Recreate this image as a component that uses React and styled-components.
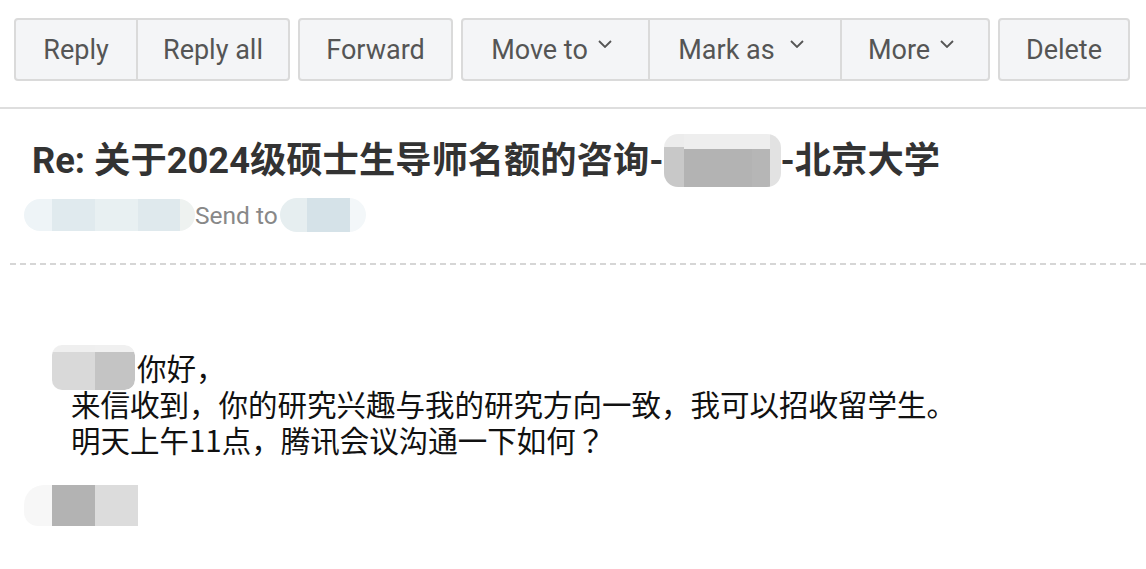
import React from "react";
import styled, { createGlobalStyle } from "styled-components";

const Global = createGlobalStyle`
  html, body { margin: 0; padding: 0; background: #fff; }
  body { font-family: Roboto, "Noto Sans CJK SC", sans-serif; }
`;

const Page = styled.div`
  width: 1146px;
  height: 569px;
  overflow: hidden;
  background: #fff;
`;

const Toolbar = styled.div`
  display: flex;
  gap: 8px;
  padding: 18px 14px 0;
`;

const Group = styled.div`
  display: flex;
  height: 63px;
  box-sizing: border-box;
  border: 2px solid #dadada;
  border-radius: 4px;
  background: #f4f5f7;
  overflow: hidden;
`;

const Button = styled.button`
  all: unset;
  box-sizing: border-box;
  width: ${(p) => p.$w}px;
  padding-right: ${(p) => (p.$menu ? 8 : 0)}px;
  display: flex;
  align-items: center;
  justify-content: center;
  gap: ${(p) => p.$gap || 10}px;
  font-family: Roboto, sans-serif;
  font-size: 27px;
  color: #555;
  & + & { border-left: 2px solid #dadada; }
`;

const Chevron = styled.svg`
  width: 14px;
  height: 8px;
  margin-top: -12px;
  flex: none;
`;

const Divider = styled.div`
  height: 2px;
  background: #dedede;
  margin-top: 26px;
`;

const Header = styled.div`
  padding-left: 32px;
  margin-top: 25px;
`;

const Title = styled.h1`
  margin: 0;
  font-family: Roboto, "Noto Sans CJK SC", sans-serif;
  font-weight: 700;
  font-size: 36.3px;
  line-height: 43px;
  color: #333;
  display: flex;
  align-items: center;
  white-space: nowrap;
`;

const SendRow = styled.div`
  display: flex;
  align-items: center;
  margin: 11px 0 0 24px;
  height: 34px;
  font-family: Roboto, sans-serif;
  font-size: 24.5px;
  color: #888;
`;

const Dashed = styled.div`
  margin: 31px 0 0 10px;
  height: 2px;
  background: repeating-linear-gradient(90deg, #d6d6d6 0 6px, transparent 6px 10px);
`;

const Body = styled.div`
  margin-top: 84px;
  padding-left: 71px;
  font-family: "Noto Sans CJK JP", "Noto Sans CJK SC", sans-serif;
  font-size: 29.5px;
  line-height: 36px;
  color: #111;
`;

const Line = styled.div`
  display: flex;
  align-items: center;
  height: 36px;
  white-space: nowrap;
  margin-left: ${(p) => p.$indent || 0}px;
`;

const Redact = styled.span`
  display: inline-flex;
  flex: none;
  height: ${(p) => p.$h}px;
  margin: ${(p) => p.$m || "0"};
  border-radius: ${(p) => p.$r || 0}px;
  overflow: hidden;
`;

const Seg = styled.span`
  display: block;
  width: ${(p) => p.$w}px;
  height: 100%;
  background: ${(p) => p.$bg};
  border-radius: ${(p) => p.$rad || "0"};
`;

const Sign = styled.div`
  margin: 28px 0 0 24px;
`;

const Chev = () => (
  <Chevron viewBox="0 0 14 8" fill="none">
    <path d="M1 1l6 6 6-6" stroke="#555" strokeWidth="1.8" />
  </Chevron>
);

export default function App() {
  return (
    <Page>
      <Global />
      <Toolbar>
        <Group>
          <Button $w={120}>Reply</Button>
          <Button $w={152}>Reply all</Button>
        </Group>
        <Group>
          <Button $w={151}>Forward</Button>
        </Group>
        <Group>
          <Button $w={185} $menu>
            Move to <Chev />
          </Button>
          <Button $w={192} $gap={15} $menu>
            Mark as <Chev />
          </Button>
          <Button $w={148} $menu>
            More <Chev />
          </Button>
        </Group>
        <Group>
          <Button $w={128}>Delete</Button>
        </Group>
      </Toolbar>
      <Divider />
      <Header>
        <Title>
          Re: 关于2024级硕士生导师名额的咨询-
          <Redact $h={53} $r={14}>
            <Seg $w={20} $bg="linear-gradient(#ececec 0 25%, #c8c8c8 25%)" />
            <Seg $w={68} $bg="linear-gradient(#eeeeee 0 28%, #b3b3b3 28%)" />
            <Seg $w={18} $bg="linear-gradient(#eeeeee 0 28%, #b6b6b6 28%)" />
            <Seg $w={11} $bg="#e2e2e2" />
          </Redact>
          -北京大学
        </Title>
      </Header>
      <SendRow>
        <Redact $h={32} $r={16}>
          <Seg $w={28} $bg="#eef4f7" />
          <Seg $w={43} $bg="#e0eaee" />
          <Seg $w={43} $bg="#e8f0f2" />
          <Seg $w={42} $bg="#dfe9ed" />
          <Seg $w={15} $bg="#eef2f0" />
        </Redact>
        Send to
        <Redact $h={34} $r={17} $m="0 0 0 2px">
          <Seg $w={27} $bg="#e6eef0" />
          <Seg $w={43} $bg="#d5e2e8" />
          <Seg $w={16} $bg="#f3f7f9" />
        </Redact>
      </SendRow>
      <Dashed />
      <Body>
        <Line $indent={-19}>
          <Redact $h={45} $r={10} $m="0 2px 0 0">
            <Seg $w={43} $bg="linear-gradient(#efefef 0 16%, #d9d9d9 16%)" />
            <Seg $w={40} $bg="linear-gradient(#f0f0f0 0 16%, #c4c4c4 16%)" $rad="0 10px 10px 0" />
          </Redact>
          你好，
        </Line>
        <Line>来信收到，你的研究兴趣与我的研究方向一致，我可以招收留学生。</Line>
        <Line>明天上午11点，腾讯会议沟通一下如何？</Line>
      </Body>
      <Sign>
        <Redact $h={41}>
          <Seg $w={28} $bg="#f7f7f7" $rad="20px 0 0 14px" />
          <Seg $w={43} $bg="#b3b3b3" />
          <Seg $w={43} $bg="#dcdcdc" />
        </Redact>
      </Sign>
    </Page>
  );
}
